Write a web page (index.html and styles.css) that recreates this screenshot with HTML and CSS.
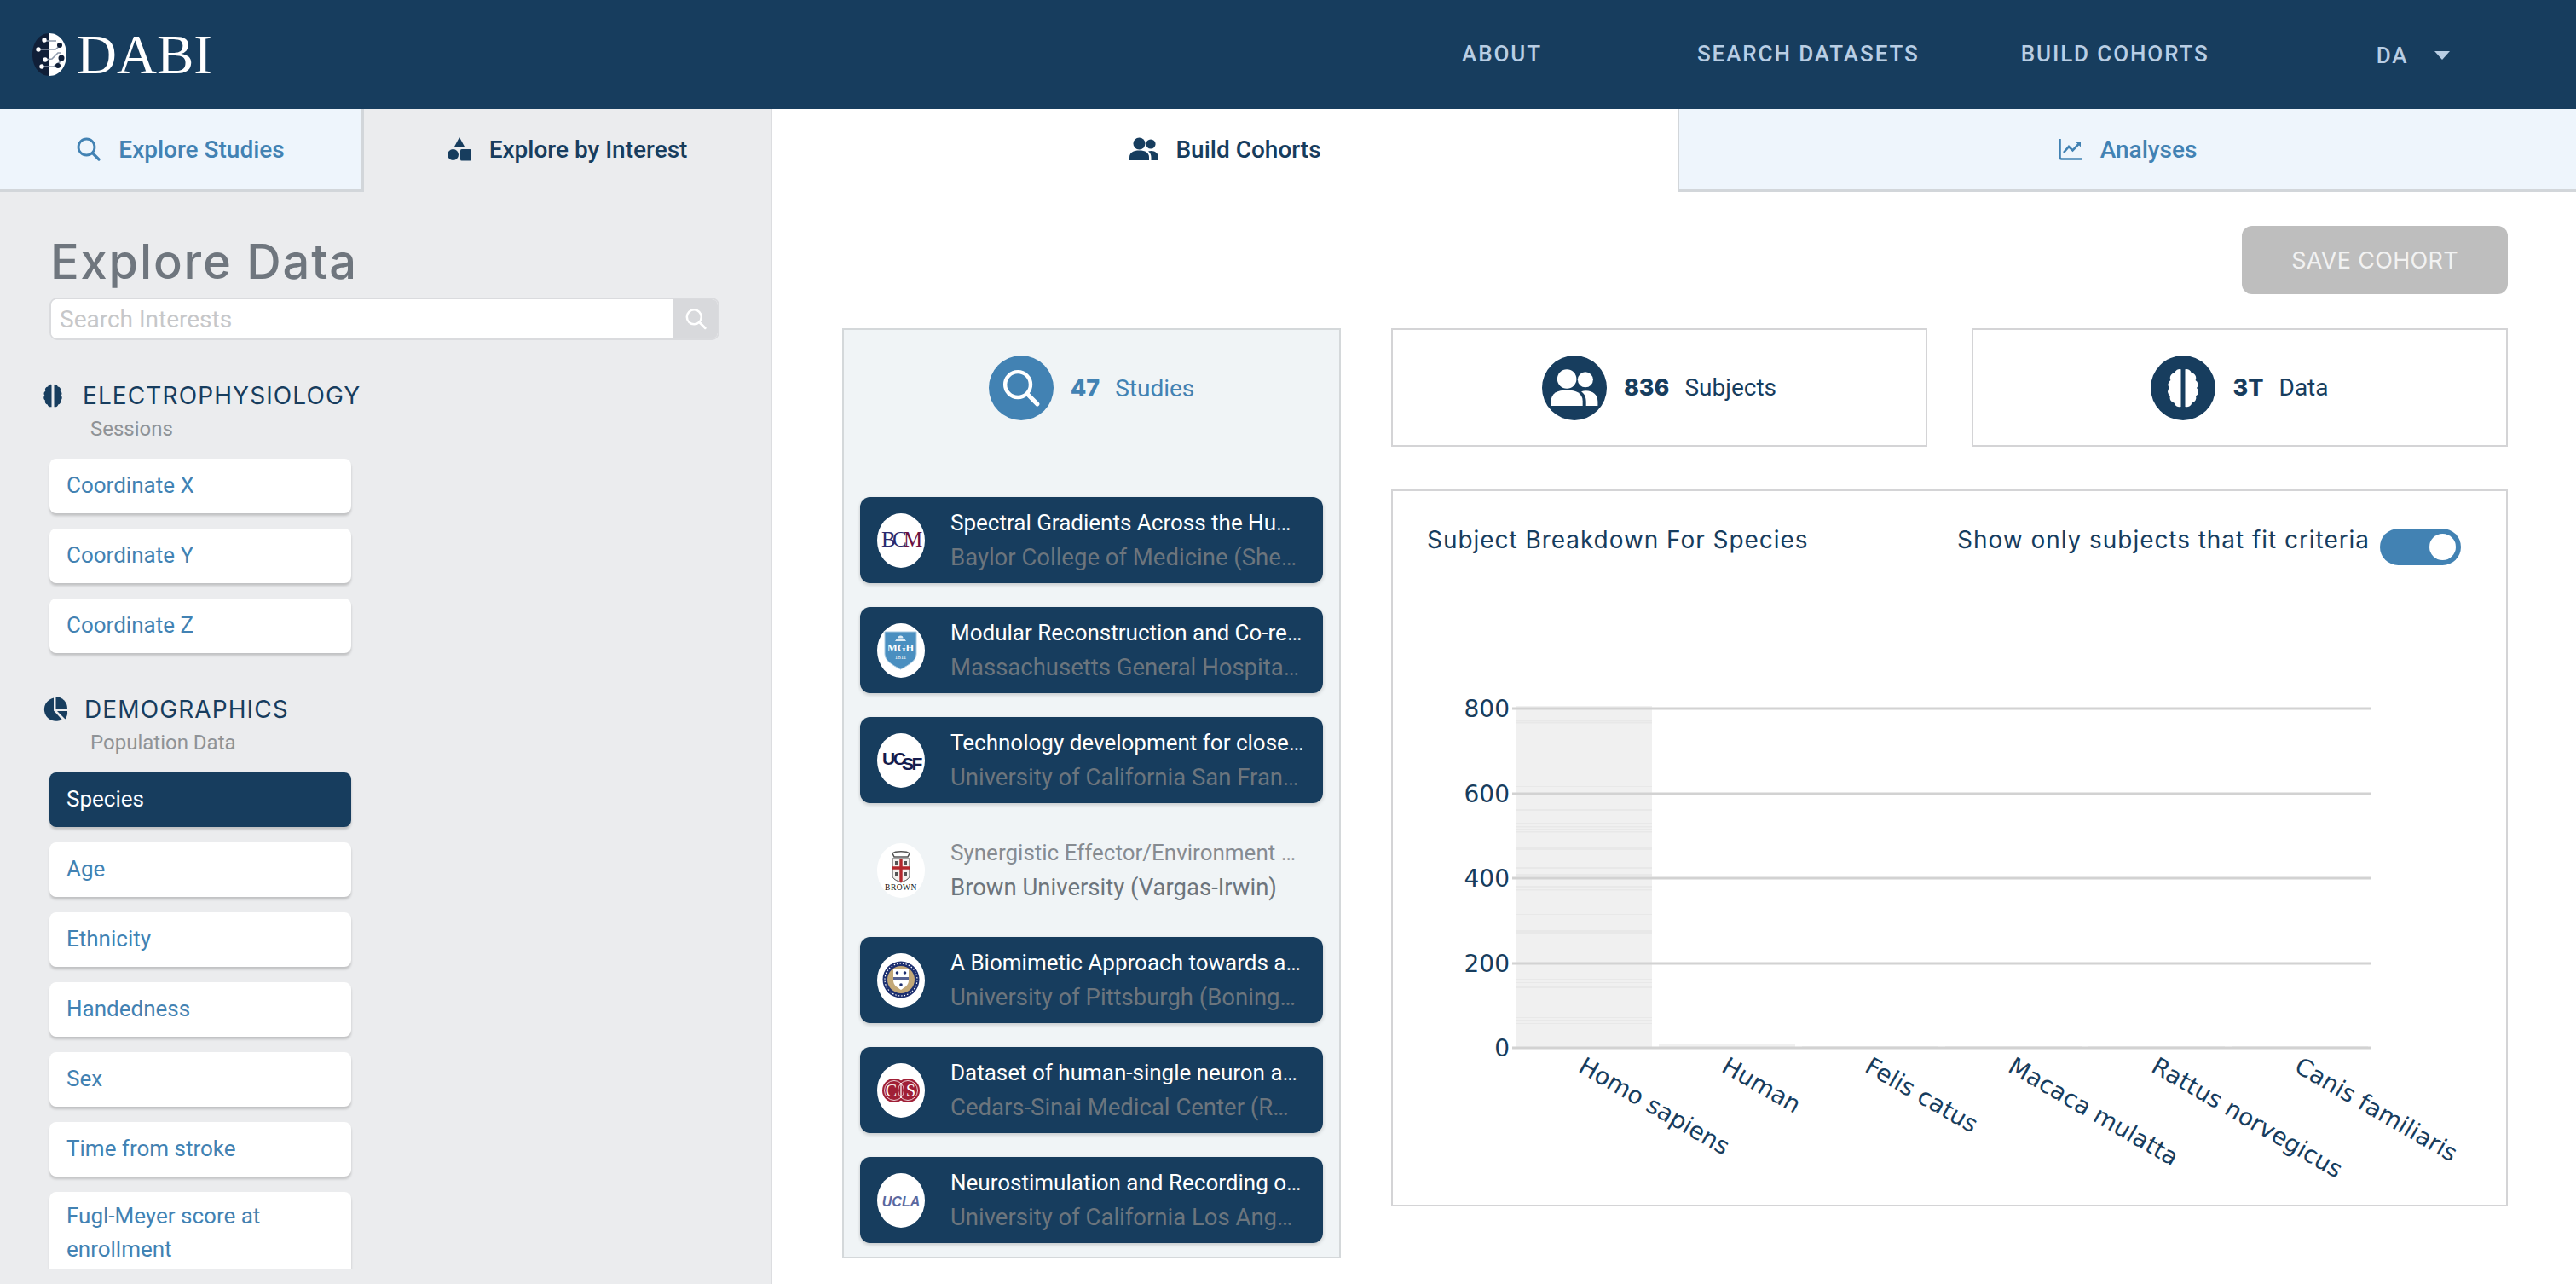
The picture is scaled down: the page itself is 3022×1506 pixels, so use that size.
FILE: index.html
```html
<!DOCTYPE html>
<html lang="en">
<head>
<meta charset="utf-8">
<title>DABI - Build Cohorts</title>
<link rel="stylesheet" href="styles.css">
</head>
<body>
<svg class="defs" width="0" height="0" aria-hidden="true">
  <symbol id="i-search" viewBox="0 0 28 28"><circle cx="11.5" cy="11.5" r="9.5" fill="none" stroke="currentColor" stroke-width="2.8"/><path d="M18.5 18.5L26 26" stroke="currentColor" stroke-width="3.2" stroke-linecap="round"/></symbol>
  <symbol id="i-shapes" viewBox="0 0 28 28"><path d="M14 0l6.5 12h-13z" fill="currentColor"/><circle cx="6.5" cy="20.5" r="6.5" fill="currentColor"/><rect x="15" y="14" width="13" height="13.5" rx="1.6" fill="currentColor"/></symbol>
  <symbol id="i-users" viewBox="0 0 36 28"><circle cx="12.5" cy="7.5" r="7" fill="currentColor"/><circle cx="26" cy="8" r="5.6" fill="currentColor"/><path d="M1 27v-3.500C1 18 5.500 15.500 12.500 15.500S24 18 24 23.500V27z" fill="currentColor"/><path d="M26.500 27H35v-3c0-5-3.500-8-8.500-8-1.300 0-2.500.2-3.500.6 2.600 1.900 3.500 4.400 3.500 7.400z" fill="currentColor"/></symbol>
  <symbol id="i-chart" viewBox="0 0 28 28"><path d="M1.500 2v21.500a2 2 0 0 0 2 2H28" fill="none" stroke="currentColor" stroke-width="2.6"/><path d="M6 18l6-7 4.500 4.500L25 6.500" fill="none" stroke="currentColor" stroke-width="2.6"/><path d="M20 5.500h6v6z" fill="currentColor"/></symbol>
  <symbol id="i-brain" viewBox="0 0 24 24"><g id="brain-half"><path fill="currentColor" d="M10.800 1.500A2.900 2.900 0 0 0 7.300 3.500 2.900 2.900 0 0 0 5 7.700 2.800 2.800 0 0 0 4.300 12 2.800 2.800 0 0 0 4.800 16.500 2.900 2.900 0 0 0 7 20.400 2.900 2.900 0 0 0 10.800 22.500z"/></g><use href="#brain-half" transform="matrix(-1 0 0 1 24 0)"/></symbol>
  <symbol id="i-pie" viewBox="0 0 30 30"><path d="M13.500 1.500a13.800 13.800 0 1 0 9.700 25.400L13.500 16.500z" fill="currentColor"/><path d="M16 0v14h13.500A14 14 0 0 0 16 0z" fill="currentColor"/><path d="M17.500 17l9.500 9.500a13.500 13.500 0 0 0 2.500-9.500z" fill="currentColor"/></symbol>
</svg>

<header class="topbar">
  <a class="brand">
    <svg class="brand-mark" viewBox="0 0 40 50" aria-hidden="true">
      <path d="M20 0C8 0 0 11 0 25s8 25 20 25z" fill="#101f38"/>
      <path d="M20 0c12 0 20 11 20 25s-8 25-20 25z" fill="#fff"/>
      <g fill="none" stroke-width="1.6">
        <path d="M13 9h15M7 19h20l6-5M15 31l8-1 7-7h4M11 39h14l8-6" stroke="#8d99ab"/>
      </g>
      <g fill="#fff"><circle cx="14" cy="8" r="2.700"/><circle cx="7" cy="19" r="2.700"/><circle cx="15" cy="31" r="2.700"/><circle cx="11" cy="39" r="2.700"/></g>
      <g fill="#101f38"><circle cx="32" cy="14" r="3"/><circle cx="34" cy="29" r="3.500"/><circle cx="30" cy="38" r="3"/></g>
    </svg>
    <span class="brand-name">DABI</span>
  </a>
  <nav class="topnav">
    <a class="topnav-link topnav-about">ABOUT</a>
    <a class="topnav-link topnav-search">SEARCH DATASETS</a>
    <a class="topnav-link topnav-build">BUILD COHORTS</a>
    <a class="topnav-link topnav-user">DA<span class="caret"></span></a>
  </nav>
</header>

<div class="page">
  <aside class="sidebar">
    <div class="tabs">
      <a class="tab tab-idle tab-studies"><svg class="tab-icon"><use href="#i-search"/></svg>Explore Studies</a>
      <a class="tab tab-interest"><svg class="tab-icon"><use href="#i-shapes"/></svg>Explore by Interest</a>
    </div>
    <div class="sidebar-body">
      <h1 class="sidebar-title">Explore Data</h1>
      <div class="search">
        <input class="search-input" type="text" placeholder="Search Interests">
        <span class="search-btn"><svg class="search-btn-icon"><use href="#i-search"/></svg></span>
      </div>
      <div class="facets">
        <section class="facet">
          <h2 class="facet-head"><svg class="facet-icon"><use href="#i-brain"/></svg>ELECTROPHYSIOLOGY</h2>
          <p class="facet-sub">Sessions</p>
          <a class="facet-item">Coordinate X</a>
          <a class="facet-item">Coordinate Y</a>
          <a class="facet-item">Coordinate Z</a>
        </section>
        <section class="facet">
          <h2 class="facet-head"><svg class="facet-icon facet-icon-pie"><use href="#i-pie"/></svg>DEMOGRAPHICS</h2>
          <p class="facet-sub">Population Data</p>
          <a class="facet-item facet-item-active">Species</a>
          <a class="facet-item">Age</a>
          <a class="facet-item">Ethnicity</a>
          <a class="facet-item">Handedness</a>
          <a class="facet-item">Sex</a>
          <a class="facet-item">Time from stroke</a>
          <a class="facet-item facet-item-wrap">Fugl-Meyer score at enrollment</a>
        </section>
      </div>
    </div>
  </aside>

  <main class="content">
    <div class="tabs">
      <a class="tab tab-build"><svg class="tab-icon tab-icon-wide"><use href="#i-users"/></svg>Build Cohorts</a>
      <a class="tab tab-idle tab-analyses"><svg class="tab-icon"><use href="#i-chart"/></svg>Analyses</a>
    </div>
    <div class="workspace">
      <div class="actions"><button class="save-btn" type="button">SAVE COHORT</button></div>
      <div class="columns">
        <section class="studies">
          <div class="stat stat-studies">
            <span class="stat-circle stat-circle-blue"><svg class="stat-search"><use href="#i-search"/></svg></span>
            <b class="stat-num">47</b><span class="stat-label">Studies</span>
          </div>
          <ul class="study-list">
            <li class="study">
              <span class="org"><svg class="org-svg" viewBox="0 0 56 64"><text class="org-bcm" x="5" y="39" fill="#2a2a6e">B</text><text class="org-bcm" x="18" y="39" fill="#2a2a6e">C</text><text class="org-bcm" x="31" y="39" fill="#6a1140">M</text></svg></span>
              <div class="study-text"><div class="study-title">Spectral Gradients Across the Human Cortex</div><div class="study-org">Baylor College of Medicine (Sheth)</div></div>
            </li>
            <li class="study">
              <span class="org"><svg class="org-svg" viewBox="0 0 56 64"><path d="M9 10h37v26c0 8-9 13-18.500 18C18 49 9 44 9 36z" fill="#4a8fc0" stroke="#a9cbe2" stroke-width="1"/><path d="M21 21h13l-2-3h-9zM24.500 17.500a3 3 0 0 1 6 0z" fill="#dcebf5"/><text class="org-mgh" x="27.500" y="33" text-anchor="middle">MGH</text><text class="org-mgh-year" x="27.500" y="42" text-anchor="middle">1811</text></svg></span>
              <div class="study-text"><div class="study-title">Modular Reconstruction and Co-registration</div><div class="study-org">Massachusetts General Hospital (Cash)</div></div>
            </li>
            <li class="study">
              <span class="org"><svg class="org-svg" viewBox="0 0 56 64"><text class="org-ucsf" x="6" y="37" fill="#141b4d">UC</text><text class="org-ucsf" x="29" y="43" fill="#141b4d">SF</text></svg></span>
              <div class="study-text"><div class="study-title">Technology development for closed-loop</div><div class="study-org">University of California San Francisco (Rao)</div></div>
            </li>
            <li class="study study-plain">
              <span class="org"><svg class="org-svg" viewBox="0 0 56 64"><path d="M18 12c3-3 17-3 20 0l-2 4H20z" fill="none" stroke="#555" stroke-width="1.600"/><path d="M18 18h20v20c0 4-5 6-10 8-5-2-10-4-10-8z" fill="#f4f1ee" stroke="#444" stroke-width="1"/><path d="M18 29h20M28 18v28" stroke="#b3282d" stroke-width="3.400"/><g fill="#555"><rect x="21" y="21" width="4" height="4"/><rect x="31" y="21" width="4" height="4"/><rect x="21" y="34" width="4" height="4"/><rect x="31" y="34" width="4" height="4"/></g><text class="org-brown" x="28" y="55" text-anchor="middle">BROWN</text></svg></span>
              <div class="study-text"><div class="study-title">Synergistic Effector/Environment Coupling</div><div class="study-org">Brown University (Vargas-Irwin)</div></div>
            </li>
            <li class="study">
              <span class="org"><svg class="org-svg" viewBox="0 0 56 64"><circle cx="28" cy="31" r="21.500" fill="#1d2f6f"/><circle cx="28" cy="31" r="19" fill="none" stroke="#fff" stroke-width="1.200" stroke-dasharray="1.500 2"/><circle cx="28" cy="31" r="16" fill="#c3a878"/><path d="M19 19h18v13c0 6-5 8-9 11-4-3-9-5-9-11z" fill="#fff"/><path d="M19 28h18v4H19z" fill="#1d2f6f" opacity=".75"/><circle cx="23.500" cy="23" r="1.800" fill="#1d2f6f"/><circle cx="32.500" cy="23" r="1.800" fill="#1d2f6f"/><circle cx="28" cy="37" r="1.800" fill="#1d2f6f"/></svg></span>
              <div class="study-text"><div class="study-title">A Biomimetic Approach towards a Brain</div><div class="study-org">University of Pittsburgh (Boninger)</div></div>
            </li>
            <li class="study">
              <span class="org"><svg class="org-svg" viewBox="0 0 56 64"><circle cx="20" cy="32" r="14" fill="#a01f36"/><circle cx="36" cy="32" r="14" fill="#a01f36"/><circle cx="20" cy="32" r="11.500" fill="none" stroke="#fff" stroke-width=".8"/><circle cx="36" cy="32" r="11.500" fill="none" stroke="#fff" stroke-width=".8"/><text class="org-cs" x="16.500" y="39" text-anchor="middle">C</text><text class="org-cs" x="39.500" y="39" text-anchor="middle">S</text><path d="M28 23v18" stroke="#fff" stroke-width="1.200"/></svg></span>
              <div class="study-text"><div class="study-title">Dataset of human-single neuron activity</div><div class="study-org study-org-short">Cedars-Sinai Medical Center (Rutishauser)</div></div>
            </li>
            <li class="study">
              <span class="org"><svg class="org-svg" viewBox="0 0 56 64"><text class="org-ucla" x="28" y="39" text-anchor="middle">UCLA</text></svg></span>
              <div class="study-text"><div class="study-title">Neurostimulation and Recording of Human</div><div class="study-org">University of California Los Angeles (Fried)</div></div>
            </li>
          </ul>
        </section>

        <div class="results">
          <div class="stat-row">
            <div class="stat stat-box">
              <span class="stat-circle"><svg class="stat-users"><use href="#i-users"/></svg></span>
              <b class="stat-num stat-num-dark">836</b><span class="stat-label stat-label-dark">Subjects</span>
            </div>
            <div class="stat stat-box">
              <span class="stat-circle"><svg class="stat-brain"><use href="#i-brain"/></svg></span>
              <b class="stat-num stat-num-dark">3T</b><span class="stat-label stat-label-dark">Data</span>
            </div>
          </div>
          <section class="breakdown">
            <div class="breakdown-head">
              <h3 class="breakdown-title">Subject Breakdown For Species</h3>
              <label class="fit-toggle"><span class="fit-label">Show only subjects that fit criteria</span><span class="switch"><span class="switch-knob"></span></span></label>
            </div>
            <svg class="chart" viewBox="1634 690 1306 720">
              <rect x="1778" y="828" width="160" height="401" class="bar"/>
              <g class="bar-stripe">
                <rect x="1778" y="845" width="160" height="1.500"/><rect x="1778" y="847" width="160" height="1.500"/>
                <rect x="1778" y="919" width="160" height="1"/><rect x="1778" y="922" width="160" height="1"/>
                <rect x="1778" y="949" width="160" height="2"/>
                <rect x="1778" y="965" width="160" height="1"/><rect x="1778" y="969" width="160" height="1.500"/><rect x="1778" y="972" width="160" height="1"/><rect x="1778" y="975" width="160" height="1.500"/>
                <rect x="1778" y="993" width="160" height="4"/>
                <rect x="1778" y="1017" width="160" height="2"/><rect x="1778" y="1025" width="160" height="2"/>
                <rect x="1778" y="1039" width="160" height="3"/><rect x="1778" y="1043" width="160" height="1.500"/>
                <rect x="1778" y="1072" width="160" height="1"/>
                <rect x="1778" y="1091" width="160" height="4"/>
                <rect x="1778" y="1148" width="160" height="1"/><rect x="1778" y="1152" width="160" height="1"/><rect x="1778" y="1157" width="160" height="2"/>
                <rect x="1778" y="1193" width="160" height="1"/><rect x="1778" y="1196" width="160" height="1"/><rect x="1778" y="1200" width="160" height="1"/><rect x="1778" y="1204" width="160" height="1"/>
              </g>
              <rect x="1946" y="1224" width="160" height="5" class="bar"/>
              <rect x="2114" y="1227" width="160" height="2" class="bar"/>
              <rect x="2282" y="1227" width="160" height="2" class="bar"/>
              <rect x="2450" y="1227" width="160" height="2" class="bar"/>
              <rect x="2618" y="1227" width="160" height="2" class="bar"/>
              <g class="grid">
                <path d="M1774 831H2782M1774 931H2782M1774 1030H2782M1774 1130H2782M1774 1229H2782"/>
              </g>
              <g class="tick">
                <text x="1771" y="841">800</text>
                <text x="1771" y="941">600</text>
                <text x="1771" y="1040">400</text>
                <text x="1771" y="1140">200</text>
                <text x="1771" y="1239">0</text>
              </g>
              <g class="cat">
                <text transform="translate(1850 1256) rotate(30)">Homo sapiens</text>
                <text transform="translate(2018 1256) rotate(30)">Human</text>
                <text transform="translate(2186 1256) rotate(30)">Felis catus</text>
                <text transform="translate(2354 1256) rotate(30)">Macaca mulatta</text>
                <text transform="translate(2522 1256) rotate(30)">Rattus norvegicus</text>
                <text transform="translate(2690 1256) rotate(30)">Canis familiaris</text>
              </g>
            </svg>
          </section>
        </div>
      </div>
    </div>
  </main>
</div>
</body>
</html>
```
FILE: styles.css
```css
* { box-sizing: border-box; }
html, body { margin: 0; padding: 0; }
body {
  width: 3022px;
  height: 1506px;
  overflow: hidden;
  background: #fff;
  color: #173d5e;
  font-family: Roboto, "Liberation Sans", sans-serif;
}
a { color: inherit; text-decoration: none; }
ul { list-style: none; margin: 0; padding: 0; }
h1, h2, h3, p { margin: 0; font-weight: 400; }
.defs { position: absolute; }

/* top bar */
.topbar {
  height: 128px;
  background: #173d5e;
  display: flex;
  align-items: center;
}
.brand { display: flex; align-items: center; margin-left: 38px; }
.brand-mark { width: 40px; height: 50px; display: block; margin-right: 12px; }
.brand-name {
  font-family: "Liberation Serif", serif;
  font-size: 65px;
  line-height: 60px;
  color: #fff;
  height: 60px;
}
.topnav { display: flex; align-items: center; margin-left: auto; width: 1307px; height: 100%; padding-bottom: 2px; }
.topnav-link {
  font-size: 26px;
  font-weight: 500;
  letter-spacing: 1.9px;
  color: #b9cee4;
  white-space: nowrap;
}
.topnav-search { margin-left: 182px; }
.topnav-build { margin-left: 119px; }
.topnav-user { margin-left: 196px; margin-top: 4px; display: flex; align-items: center; }
.caret {
  width: 0; height: 0;
  margin-left: 30px;
  border-left: 9px solid transparent;
  border-right: 9px solid transparent;
  border-top: 10px solid #b9cee4;
}

.page { display: flex; height: 1378px; }

/* tabs */
.tabs { display: flex; height: 97px; flex: none; }
.tab {
  display: flex;
  align-items: center;
  justify-content: center;
  font-size: 28px;
  font-weight: 500;
  color: #173d5e;
  white-space: nowrap;
}
.tab-idle {
  background: #eef5fc;
  color: #4282b3;
  border-bottom: 3px solid #d2d6da;
}
.tab-studies { width: 428px; border-right: 3px solid #d2d6da; }
.tab-interest { width: 478px; padding-bottom: 3px; }
.tab-build { width: 1062px; padding-bottom: 3px; }
.tab-analyses { width: 1054px; border-left: 2px solid #d2d6da; }
.tab-icon { width: 28px; height: 28px; margin-right: 21px; flex: none; }
.tab-icon-wide { width: 36px; margin-right: 19px; }

/* sidebar */
.sidebar {
  width: 906px;
  flex: none;
  background: #ebecee;
  border-right: 2px solid #dcdde0;
  display: flex;
  flex-direction: column;
}
.sidebar-body { padding: 0 60px 0 0; display: flex; flex-direction: column; height: 1281px; }
.sidebar-title {
  font-family: Inter, "Noto Sans", sans-serif;
  font-size: 56px;
  font-weight: 500;
  letter-spacing: 1.8px;
  line-height: 68px;
  color: #6f767e;
  margin: 48px 0 0 59px;
}
.search {
  margin: 8px 0 0 58px;
  width: 786px;
  height: 50px;
  flex: none;
  display: flex;
  border: 2px solid #dadbde;
  border-radius: 9px;
  overflow: hidden;
  background: #fff;
}
.search-input {
  flex: 1;
  min-width: 0;
  border: 0;
  outline: 0;
  padding: 0 10px;
  font: 400 28px Roboto, sans-serif;
  background: #fff;
}
.search-input::placeholder { color: #c6c7c9; opacity: 1; }
.search-btn {
  width: 52px;
  background: #d8d9dc;
  color: #fff;
  display: flex;
  align-items: center;
  justify-content: center;
}
.search-btn-icon { width: 25px; height: 26px; }

.facets { margin-top: 48px; height: 1041px; flex: none; overflow: hidden; }
.facet { margin-bottom: 49px; }
.facet-head {
  display: flex;
  align-items: center;
  font-family: Inter, "Noto Sans", sans-serif;
  font-size: 28px;
  letter-spacing: 1.1px;
  line-height: 34px;
  color: #173d5e;
  padding-left: 47px;
}
.facet-icon { width: 30px; height: 30px; margin-right: 20px; flex: none; }
.facet-icon-pie { width: 31px; margin-right: 19px; margin-left: 2px; }
.facet-sub {
  font-size: 24px;
  line-height: 30px;
  color: #8f9397;
  margin: 7px 0 20px 106px;
}
.facet-item {
  display: block;
  width: 354px;
  height: 64px;
  margin: 0 0 18px 58px;
  padding: 0 20px;
  background: #fff;
  border-radius: 8px;
  box-shadow: 0 3px 3px rgba(0, 0, 0, .18);
  color: #4282b3;
  font-size: 26px;
  line-height: 62px;
}
.facet-item-active { background: #173d5e; color: #fff; }
.facet-item-wrap { height: 120px; line-height: 39px; padding-top: 9px; }

/* content */
.content { flex: 1; min-width: 0; display: flex; flex-direction: column; }
.workspace { padding: 40px 80px 0 82px; }
.actions { display: flex; justify-content: flex-end; }
.save-btn {
  width: 312px;
  height: 80px;
  border: 0;
  border-radius: 12px;
  background: #bebebe;
  color: #f2f2f2;
  font-family: Inter, "Noto Sans", sans-serif;
  font-size: 27px;
  letter-spacing: .3px;
  padding: 0;
}
.columns { display: flex; gap: 59px; margin-top: 40px; align-items: flex-start; }

.stat-circle {
  width: 76px;
  height: 76px;
  border-radius: 50%;
  background: #173d5e;
  color: #fff;
  display: flex;
  align-items: center;
  justify-content: center;
  flex: none;
}
.stat-circle-blue { background: #4282b3; }
.stat-search { width: 44px; height: 44px; }
.stat-users { width: 58px; height: 46px; }
.stat-brain { width: 50px; height: 50px; }
.stat { display: flex; align-items: center; justify-content: center; }
.stat-num {
  font-family: Inter, "Noto Sans", sans-serif;
  font-weight: 800;
  font-size: 27px;
  color: #4282b3;
  margin-left: 20px;
}
.stat-num-dark { color: #173d5e; }
.stat-label { font-size: 28px; color: #4282b3; margin-left: 18px; }
.stat-label-dark { color: #173d5e; }

.studies {
  width: 585px;
  height: 1091px;
  flex: none;
  background: #f0f4f6;
  border: 2px solid #d4d8da;
  padding: 0 19px;
}
.stat-studies { height: 181px; margin-bottom: 15px; padding-bottom: 45px; }
.study-list { display: flex; flex-direction: column; gap: 28px; }
.study {
  height: 101px;
  display: flex;
  align-items: center;
  padding-left: 20px;
  background: #173d5e;
  border-radius: 12px;
  box-shadow: 0 2px 4px rgba(0, 0, 0, .18);
}
.study-plain { background: transparent; box-shadow: none; }
.org {
  width: 56px;
  height: 64px;
  flex: none;
  background: #fff;
  border-radius: 50%;
  overflow: hidden;
  display: block;
}
.org-svg { width: 56px; height: 64px; display: block; }
.org-bcm { font: 400 25px "Liberation Serif", serif; }
.org-mgh { font: 700 12.500px "Liberation Serif", serif; fill: #fff; }
.org-mgh-year { font: 400 7px "Liberation Serif", serif; fill: #fff; }
.org-ucsf { font: 700 21px "Liberation Sans", sans-serif; letter-spacing: -2.500px; }
.org-brown { font: 400 9.500px "Liberation Serif", serif; letter-spacing: .5px; fill: #111; }
.org-cs { font: 400 20px "Liberation Serif", serif; fill: #fff; }
.org-ucla { font: italic 700 16px "Liberation Sans", sans-serif; fill: #5a689f; }
.study-text { margin-left: 30px; width: 415px; min-width: 0; }
.study-title,
.study-org {
  overflow: hidden;
  white-space: nowrap;
  text-overflow: ellipsis;
}
.study-title { font-size: 26px; line-height: 40px; color: #fff; }
.study-org { font-size: 27.500px; line-height: 42px; color: #6c757d; }
.study-org-short { max-width: 408px; }
.study-plain .study-title { color: #868b91; }

.results { width: 1310px; flex: none; }
.stat-row { display: flex; gap: 52px; }
.stat-box {
  width: 629px;
  height: 139px;
  border: 2px solid #d4d4d6;
}
.breakdown {
  margin-top: 50px;
  height: 841px;
  border: 2px solid #d4d4d6;
  display: flex;
  flex-direction: column;
}
.breakdown-head {
  height: 114px;
  flex: none;
  padding: 40px 53px 0 40px;
  display: flex;
  justify-content: space-between;
  align-items: flex-start;
  font-family: Inter, "Noto Sans", sans-serif;
  font-size: 28px;
  letter-spacing: .95px;
}
.breakdown-title { font-size: 28px; line-height: 34px; color: #173d5e; }
.fit-toggle { display: flex; align-items: flex-start; }
.fit-label { line-height: 34px; color: #173d5e; }
.switch {
  width: 95px;
  height: 43px;
  border-radius: 22px;
  background: #4282b3;
  margin: 4px 0 0 12px;
  display: flex;
  justify-content: flex-end;
  align-items: center;
  padding-right: 6px;
}
.switch-knob { width: 31px; height: 31px; border-radius: 50%; background: #fff; display: block; }
.chart { display: block; width: 1306px; height: 720px; }
.bar { fill: #f0f0f0; }
.bar-stripe rect { fill: #e8e8e8; }
.grid path { fill: none; stroke: #d2d2d2; stroke-width: 3; }
.tick text {
  font-family: "DejaVu Sans", sans-serif;
  font-size: 28px;
  fill: #173d5e;
  text-anchor: end;
}
.cat text {
  font-family: "DejaVu Sans", sans-serif;
  font-size: 28px;
  fill: #173d5e;
}
```
